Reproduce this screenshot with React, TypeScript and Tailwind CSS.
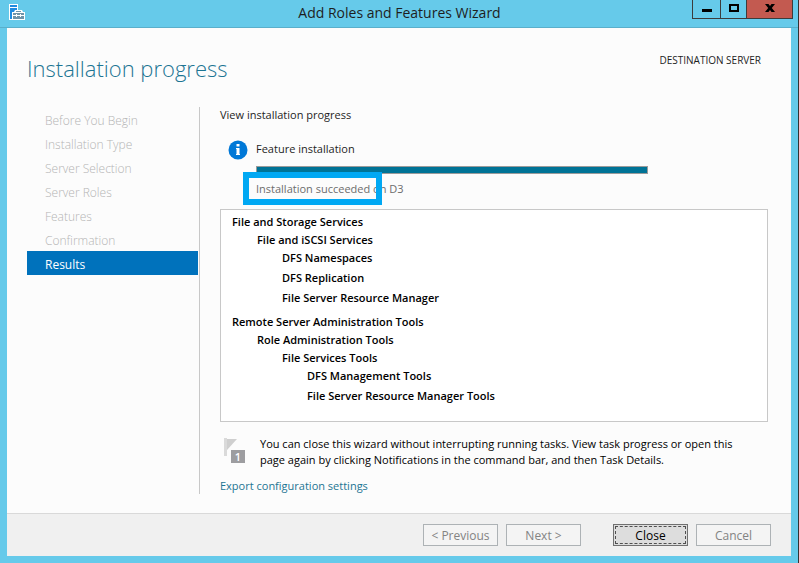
import React from 'react';

type StepProps = {
  label: string;
  active?: boolean;
};

type FeatureRow = {
  label: string;
  level: 'root' | 'child' | 'leaf' | 'deep';
  spaced?: boolean;
};

const steps: StepProps[] = [
  { label: 'Before You Begin' },
  { label: 'Installation Type' },
  { label: 'Server Selection' },
  { label: 'Server Roles' },
  { label: 'Features' },
  { label: 'Confirmation' },
  { label: 'Results', active: true },
];

const featureGroups: FeatureRow[][] = [
  [
    { label: 'File and Storage Services', level: 'root' },
    { label: 'File and iSCSI Services', level: 'child' },
    { label: 'DFS Namespaces', level: 'leaf' },
    { label: 'DFS Replication', level: 'leaf', spaced: true },
    { label: 'File Server Resource Manager', level: 'leaf', spaced: true },
  ],
  [
    { label: 'Remote Server Administration Tools', level: 'root' },
    { label: 'Role Administration Tools', level: 'child' },
    { label: 'File Services Tools', level: 'leaf' },
    { label: 'DFS Management Tools', level: 'deep' },
    { label: 'File Server Resource Manager Tools', level: 'deep', spaced: true },
  ],
];

const indents: Record<FeatureRow['level'], string> = {
  root: 'pl-0',
  child: 'pl-[25px]',
  leaf: 'pl-[50px]',
  deep: 'pl-[75px]',
};

const ServerManagerIcon = () => (
  <svg width="16" height="16" viewBox="0 0 16 16" aria-hidden="true">
    {/* server tower */}
    <path d="M0 0h9v16H0z" fill="#fff" />
    <path d="M1 1h7v2H1zM1 4h7v11H1z" fill="#1f8be0" />
    {/* toolbox */}
    <path d="M6 6h7l1 2h2v8H3V8h2z" fill="#fff" />
    <path d="M7 7h5v1H7z" fill="#6f93a8" />
    <path d="M4 9h11v2h-3v-1h-1v1H8v-1H7v1H4z" fill="#6f93a8" />
    <path d="M4 12h3v1h1v-1h3v1h1v-1h3v3H4z" fill="#6f93a8" />
  </svg>
);

const InfoIcon = () => (
  <svg width="20" height="20" viewBox="0 0 20 20" aria-hidden="true">
    <circle cx="10" cy="10" r="9.5" fill="#0078d7" />
    <path d="M8.5 4h3v2.500h-3zM8 8h3.500v6h.5v1H8v-1h.5V9H8z" fill="#fff" />
  </svg>
);

const FlagIcon = () => (
  <svg width="22" height="26" viewBox="0 0 22 26" aria-hidden="true">
    <path d="M0 0h3v18H0z" fill="#dadada" />
    <path d="M3 1h10L3 12z" fill="#cfcfcf" />
    <path d="M6 11h16v15H6z" fill="#fcfcfc" />
    <path d="M7 12h14v13H7z" fill="#9d9da0" />
    <text x="14" y="23" textAnchor="middle" fill="#fff" fontSize="11" fontWeight="600">
      1
    </text>
  </svg>
);

const TitleBar = () => (
  <header className="flex h-7 border-b border-[#5aafcb]">
    <div className="flex w-[107px] pl-[9px] pt-1">
      <ServerManagerIcon />
    </div>
    <h1 className="flex-1 pt-[3px] text-center text-sm leading-5">Add Roles and Features Wizard</h1>
    <div className="mr-[5px] flex h-[19px] w-[101px] border border-t-0 border-[#3c3c3c]">
      <button type="button" aria-label="Minimize" className="flex w-7 justify-center border-r border-[#3c3c3c] pt-[9px]">
        <span className="h-[3px] w-2.5 bg-black" />
      </button>
      <button type="button" aria-label="Maximize" className="flex w-[26px] justify-center border-r border-[#3c3c3c] pt-1">
        <span className="h-2 w-2.5 border-2 border-black" />
      </button>
      <button type="button" aria-label="Close window" className="flex flex-1 justify-center bg-[#c35a50] pt-1">
        <svg width="10" height="8" viewBox="0 0 10 8" aria-hidden="true">
          <path d="M0 0h3.500L5 2l1.500-2H10L6.800 4 10 8H6.500L5 6 3.500 8H0l3.200-4z" fill="#000" />
        </svg>
      </button>
    </div>
  </header>
);

const Step = ({ label, active = false }: StepProps) => (
  <li>
    <a
      href="#"
      aria-current={active ? 'step' : undefined}
      className={`block h-6 pl-[18px] pt-px text-xs leading-[26px] ${
        active ? 'bg-[#0072bc] text-white' : 'font-light text-[#b4b4b4]'
      }`}
    >
      {label}
    </a>
  </li>
);

const FeatureList = () => (
  <div className="mt-[11px] h-[213px] space-y-1.5 overflow-auto border border-[#c8c8c8] bg-white px-[11px] pt-[3px] font-semibold leading-[18px] text-black">
    {featureGroups.map((group) => (
      <ul key={group[0].label}>
        {group.map((row) => (
          <li key={row.label} className={`${indents[row.level]} ${row.spaced ? 'mt-0.5' : ''}`}>
            {row.label}
          </li>
        ))}
      </ul>
    ))}
  </div>
);

interface WizardButtonProps {
  children: React.ReactNode;
  disabled?: boolean;
  focused?: boolean;
}

const WizardButton = ({ children, disabled = false, focused = false }: WizardButtonProps) => (
  <button
    type="button"
    disabled={disabled}
    className={`h-[22px] w-[75px] border text-xs ${
      focused
        ? 'border-[#707070] bg-[#dddddd] p-px text-black'
        : 'border-[#adb2b5] bg-[#f4f4f4] text-[#838383]'
    }`}
  >
    <span
      className={`flex h-full items-center justify-center pt-px ${focused ? 'border border-dashed border-[#505050]' : ''}`}
    >
      {children}
    </span>
  </button>
);

export default function App() {
  return (
    <div className="flex min-h-screen flex-col border-r border-[#333333] bg-[#66caea] pb-[7px] font-['Open_Sans','Noto_Sans',sans-serif] text-[11px] text-[#1e1e1e]">
      <TitleBar />

      <main className="mx-[7px] flex flex-1 flex-col bg-[#fcfcfc]">
        <div className="flex justify-between pl-5 pr-[30px] pt-6">
          <h2 className="text-[22px] font-light leading-8 text-[#1c7593]">Installation progress</h2>
          <p className="text-[10px] leading-4">DESTINATION SERVER</p>
        </div>

        <div className="flex flex-1 pb-[19px] pl-5 pr-[23px] pt-[23px]">
          <nav aria-label="Wizard steps" className="w-[173px] shrink-0 border-r border-[#c8c8c8] pr-px">
            <ul>
              {steps.map((step) => (
                <Step key={step.label} {...step} />
              ))}
            </ul>
          </nav>

          <section className="min-w-0 flex-1 pl-5">
            <h3 className="leading-4">View installation progress</h3>

            <div className="mt-[17px] flex">
              <div className="w-9 shrink-0 pl-2">
                <InfoIcon />
              </div>
              <div className="min-w-0 flex-1 pr-[120px]">
                <p className="leading-[18px]">Feature installation</p>
                <div
                  role="progressbar"
                  aria-valuenow={100}
                  aria-label="Feature installation"
                  className="mt-2 h-2 border border-[#9b9b9b] bg-[#007396]"
                />
                <p className="relative mt-1.5 leading-[18px] text-[#6d6d6d]">
                  Installation succeeded on D3
                  <span className="absolute -left-[13px] -top-2 h-[33px] w-[139px] border-6 border-[#00a8f3]" />
                </p>
              </div>
            </div>

            <FeatureList />

            <div className="mt-[14px] flex">
              <div className="w-10 shrink-0 pl-1 pt-0.5">
                <FlagIcon />
              </div>
              <p className="leading-4 text-black">
                You can close this wizard without interrupting running tasks. View task progress or open this
                <br />
                page again by clicking Notifications in the command bar, and then Task Details.
              </p>
            </div>
            <a href="#" className="mt-2.5 block w-fit leading-4 text-[#1c7593]">
              Export configuration settings
            </a>
          </section>
        </div>

        <footer className="flex h-[43px] items-start justify-end border-t border-[#d9d9d9] bg-[#f0f0f0] pr-5 pt-2.5">
          <div className="flex gap-2">
            <WizardButton disabled>&lt; Previous</WizardButton>
            <WizardButton disabled>Next &gt;</WizardButton>
          </div>
          <div className="ml-8 flex gap-2">
            <WizardButton focused>Close</WizardButton>
            <WizardButton disabled>Cancel</WizardButton>
          </div>
        </footer>
      </main>
    </div>
  );
}
